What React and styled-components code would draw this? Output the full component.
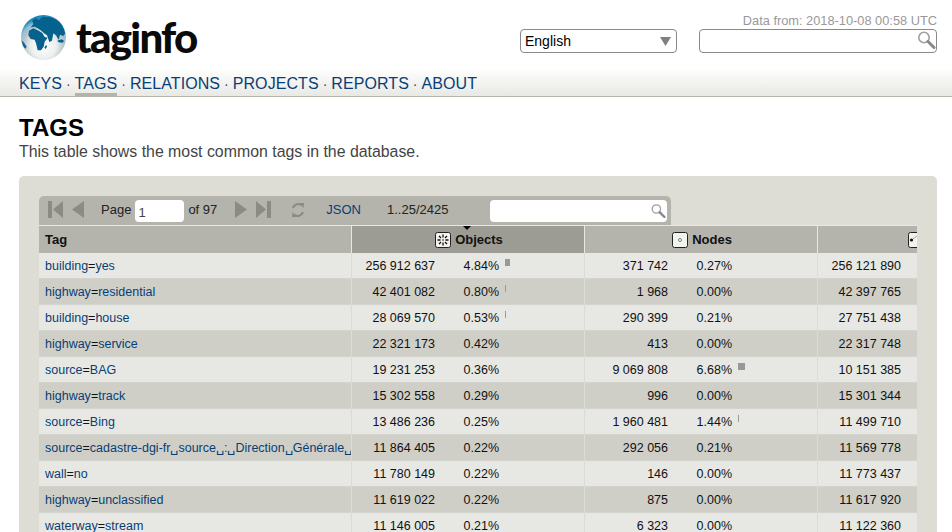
import React from 'react';
import styled, { createGlobalStyle } from 'styled-components';

const GlobalStyle = createGlobalStyle`
  html, body {
    margin: 0;
    padding: 0;
    height: 100%;
    overflow: hidden;
    background: #fff;
    font-family: "Liberation Sans", Arial, sans-serif;
    color: #000;
  }
  a { color: #083e76; text-decoration: none; }
`;

const Header = styled.header`
  height: 96px;
  border-bottom: 1px solid #b4b4ac;
  background: linear-gradient(to bottom, #fff 0, #fff 68px, #e8e8e4 96px);
  padding: 0 15px 0 19px;
  display: flex;
  flex-direction: column;
`;

const TopRow = styled.div`
  height: 70px;
  display: flex;
  justify-content: space-between;
`;

const Brand = styled.div`
  display: flex;
  align-items: flex-start;
  padding-top: 13px;
`;

const LogoText = styled.span`
  font-family: Lato, sans-serif;
  font-weight: 900;
  font-size: 42px;
  line-height: 48px;
  letter-spacing: -1.8px;
  color: #0a0a0a;
  margin-left: 8px;
`;

const Controls = styled.div`
  display: flex;
  flex-direction: column;
  align-items: flex-end;
  padding-top: 13px;
`;

const DataDate = styled.div`
  font-size: 12.8px;
  line-height: 15px;
  color: #999;
`;

const ControlRow = styled.div`
  display: flex;
  gap: 22px;
  margin-top: 1px;
`;

const LangSelect = styled.div`
  width: 157px;
  height: 24px;
  box-sizing: border-box;
  border: 1px solid #8a8a8a;
  border-radius: 4px;
  background: #fff;
  font-size: 14px;
  line-height: 22px;
  padding: 0 5px 0 4px;
  display: flex;
  justify-content: space-between;
  align-items: center;
`;

const SearchBox = styled.div`
  width: 238px;
  height: 24px;
  box-sizing: border-box;
  border: 1px solid #8a8a8a;
  border-radius: 4px;
  background: #fff;
  display: flex;
  justify-content: flex-end;
  align-items: flex-start;
`;

const Nav = styled.nav`
  display: flex;
  font-size: 16px;
  line-height: 28px;
  height: 26px;
  letter-spacing: 0.08px;
`;

const NavItem = styled.a`
  height: 23px;
  border-bottom: 3px solid ${p => (p.$active ? '#b4b4ac' : 'transparent')};
`;

const NavDot = styled.span`
  width: 12.6px;
  text-align: center;
  color: #444;
  font-size: 14px;
`;

const Main = styled.main`
  padding: 17px 15px 0 19px;
`;

const Title = styled.h1`
  margin: 0;
  font-size: 24px;
  line-height: 28px;
  font-weight: 700;
`;

const Intro = styled.p`
  margin: 0 0 14px;
  font-size: 15.88px;
  line-height: 20px;
  color: #444;
`;

const Panel = styled.section`
  background: #ddddd5;
  border-radius: 5px 5px 0 0;
  padding: 20px;
`;

const Toolbar = styled.div`
  width: 632px;
  height: 29px;
  box-sizing: border-box;
  padding-bottom: 2px;
  background: #b4b4ac;
  border-radius: 5px 5px 0 0;
  display: flex;
  align-items: center;
  font-size: 13px;
  color: #222;
`;

const PagerIcon = styled.svg`
  display: block;
  flex: none;
  margin-left: ${p => p.$gap || 0}px;
`;

const PageLabel = styled.span`
  margin-left: ${p => p.$gap || 0}px;
  white-space: nowrap;
`;

const PageInput = styled.div`
  width: 49px;
  height: 22px;
  box-sizing: border-box;
  margin: 3px 4px 0;
  padding: 5px 0 0 3px;
  background: #fff;
  border-radius: 4px;
  font-size: 13px;
  line-height: 15px;
  color: #444;
`;

const JsonLink = styled.a`
  margin-left: 21px;
`;

const QuickSearch = styled.div`
  width: 177px;
  height: 22px;
  margin: 3px 0 0 42px;
  background: #fff;
  border-radius: 4px;
  display: flex;
  justify-content: flex-end;
  align-items: center;
  padding-right: 1px;
  box-sizing: border-box;
`;

const TableClip = styled.div`
  width: 878px;
  overflow: hidden;
`;

const Table = styled.div`
  width: 1012px;
`;

const HeadRow = styled.div`
  display: grid;
  grid-template-columns: 313px 233px 233px 233px;
  height: 28px;
  border-top: 1px solid #e7e8e4;
  box-sizing: border-box;
  font-size: 13px;
  font-weight: 700;
  line-height: 26px;
  color: #111;
`;

const HeadCell = styled.div`
  position: relative;
  background: ${p => (p.$sorted ? '#9c9c94' : '#b4b4ac')};
  border-right: 1px solid #e7e8e4;
  padding-left: ${p => (p.$left ? '6px' : '2px')};
  display: flex;
  align-items: center;
  justify-content: ${p => (p.$left ? 'flex-start' : 'center')};
  gap: 4px;
`;

const SortArrow = styled.span`
  position: absolute;
  top: 0;
  left: 111px;
  width: 0;
  height: 0;
  border: 4px solid transparent;
  border-top-color: #000;
  border-bottom: 0;
`;

const Row = styled.div`
  display: grid;
  grid-template-columns: 313px 233px 233px 233px;
  height: 26px;
  box-sizing: border-box;
  border-bottom: 1px solid #d4d4ce;
  background: ${p => (p.$odd ? '#cfcfc8' : '#e7e8e4')};
  font-size: 12.5px;
  line-height: 26px;
  color: #111;
`;

const TagCell = styled.div`
  padding-left: 6px;
  border-right: 1px solid #dcdcd6;
  white-space: nowrap;
  overflow: hidden;
`;

const CountCell = styled.div`
  display: flex;
  border-right: 1px solid #dcdcd6;
`;

const Count = styled.span`
  width: 83px;
  text-align: right;
  white-space: pre;
`;

const Percent = styled.span`
  width: 64px;
  text-align: right;
`;

const Bar = styled.span`
  display: block;
  height: 7px;
  margin: 6px 0 0 6px;
  background: #999;
`;

const Globe = () => (
  <svg width="49" height="49" viewBox="57 39 147 147">
    <defs>
      <radialGradient id="sea" cx="0.5" cy="0.68" r="0.62">
        <stop offset="0" stopColor="#ffffff" />
        <stop offset="0.45" stopColor="#eef0f0" />
        <stop offset="0.72" stopColor="#b9c3c8" />
        <stop offset="0.86" stopColor="#8fc0d6" />
        <stop offset="1" stopColor="#1f8ab8" />
      </radialGradient>
      <clipPath id="ball">
        <circle cx="130.5" cy="112.5" r="66" />
      </clipPath>
    </defs>
    <circle cx="130.5" cy="112.5" r="67.5" fill="url(#sea)" />
    <g clipPath="url(#ball)" fill="#05628f">
      <path d="M96 62 L108 54 L116 60 L128 50 L150 52 L172 60 L190 76 L197 98 L190 108 L180 104 L176 120 L168 106 L160 100 L156 122 L148 126 L141 106 L132 100 L124 92 L112 84 L104 80 L92 82 L100 72 Z" />
      <path d="M87 92 L100 85 L116 92 L127 99 L134 111 L143 113 L134 125 L131 140 L123 151 L113 151 L108 130 L104 119 L92 117 L85 106 Z" />
      <path d="M62 118 L72 128 L80 140 L76 146 L66 136 Z" />
      <path d="M172 122 L184 118 L192 122 L188 128 L176 127 Z" />
      <path d="M138 134 L141 140 L136 148 L134 142 Z" />
    </g>
  </svg>
);

const Magnifier = ({ size = 20, color = '#888' }) => (
  <svg width={size} height={size} viewBox="0 0 20 20">
    <circle cx="8" cy="7.5" r="5.2" fill="none" stroke={color} strokeWidth="1.6" opacity="0.8" />
    <path d="M12 11.5 L18 17.5" stroke={color} strokeWidth="3" strokeLinecap="round" />
  </svg>
);

const Caret = () => (
  <svg width="11" height="9" viewBox="0 0 11 9">
    <path d="M0 0 H11 L5.5 9 Z" fill="#808080" />
  </svg>
);

const First = () => (
  <PagerIcon $gap={9} width="15" height="17" viewBox="0 0 15 17" fill="#8b8b85">
    <path d="M0 0 H4 V17 H0 Z M15 0 V17 L5 8.5 Z" />
  </PagerIcon>
);
const Prev = () => (
  <PagerIcon $gap={9} width="12" height="17" viewBox="0 0 12 17" fill="#8b8b85">
    <path d="M12 0 V17 L0 8.5 Z" />
  </PagerIcon>
);
const Next = () => (
  <PagerIcon $gap={18} width="12" height="17" viewBox="0 0 12 17" fill="#8b8b85">
    <path d="M0 0 V17 L12 8.5 Z" />
  </PagerIcon>
);
const Last = () => (
  <PagerIcon $gap={9} width="15" height="17" viewBox="0 0 15 17" fill="#8b8b85">
    <path d="M0 0 L10 8.5 L0 17 Z M11 0 H15 V17 H11 Z" />
  </PagerIcon>
);
const Reload = () => (
  <PagerIcon $gap={20} width="14" height="16" viewBox="0 0 14 16" fill="none" stroke="#8b8b85" strokeWidth="2.2">
    <path d="M2 6 A5.6 5.6 0 0 1 11 3.4" />
    <path d="M12 10 A5.6 5.6 0 0 1 3 12.6" />
    <path d="M9 1 L13 1 L12.5 6 Z M5 15 L1 15 L1.5 10 Z" fill="#8b8b85" stroke="none" />
  </PagerIcon>
);

const TypeIcon = ({ type }) => (
  <svg width="16" height="16" viewBox="0 0 16 16">
    <rect x="0.5" y="0.5" width="15" height="15" rx="2" fill="#f2f2ee" stroke="#222" />
    {type === 'all' && (
      <g stroke="#111" strokeWidth="1.3">
        <path d="M8 2.5 V5.5 M8 10.5 V13.5 M2.5 8 H5.5 M10.5 8 H13.5 M4 4 L6 6 M12 4 L10 6 M4 12 L6 10 M12 12 L10 10" />
        <circle cx="8" cy="8" r="0.8" fill="#111" stroke="none" />
      </g>
    )}
    {type === 'node' && <circle cx="8" cy="8" r="1.5" fill="#fff" stroke="#6a8a6a" />}
    {type === 'way' && (
      <g>
        <path d="M3.5 8 L9 4" stroke="#aaa" strokeWidth="1" />
        <circle cx="3.5" cy="8" r="1.6" fill="#111" />
      </g>
    )}
  </svg>
);

const rows = [
  ['building', 'yes', '256 912 637', '4.84', '371 742', '0.27', '256 121 890'],
  ['highway', 'residential', '42 401 082', '0.80', '1 968', '0.00', '42 397 765'],
  ['building', 'house', '28 069 570', '0.53', '290 399', '0.21', '27 751 438'],
  ['highway', 'service', '22 321 173', '0.42', '413', '0.00', '22 317 748'],
  ['source', 'BAG', '19 231 253', '0.36', '9 069 808', '6.68', '10 151 385'],
  ['highway', 'track', '15 302 558', '0.29', '996', '0.00', '15 301 344'],
  ['source', 'Bing', '13 486 236', '0.25', '1 960 481', '1.44', '11 499 710'],
  ['source', 'cadastre-dgi-fr␣source␣:␣Direction␣Générale␣des␣Impôts␣-␣Cadastre', '11 864 405', '0.22', '292 056', '0.21', '11 569 778'],
  ['wall', 'no', '11 780 149', '0.22', '146', '0.00', '11 773 437'],
  ['highway', 'unclassified', '11 619 022', '0.22', '875', '0.00', '11 617 920'],
  ['waterway', 'stream', '11 146 005', '0.21', '6 323', '0.00', '11 122 360'],
];

const Stat = ({ count, pct }) => {
  const width = Math.round(parseFloat(pct));
  return (
    <CountCell>
      <Count>{count}</Count>
      <Percent>{pct}%</Percent>
      {width > 0 && <Bar style={{ width }} />}
    </CountCell>
  );
};

const navItems = ['KEYS', 'TAGS', 'RELATIONS', 'PROJECTS', 'REPORTS', 'ABOUT'];

export default function App() {
  return (
    <>
      <GlobalStyle />
      <Header>
        <TopRow>
          <Brand>
            <Globe />
            <LogoText>taginfo</LogoText>
          </Brand>
          <Controls>
            <DataDate>Data from: 2018-10-08 00:58 UTC</DataDate>
            <ControlRow>
              <LangSelect>
                English
                <Caret />
              </LangSelect>
              <SearchBox>
                <Magnifier />
              </SearchBox>
            </ControlRow>
          </Controls>
        </TopRow>
        <Nav>
          {navItems.map((item, i) => (
            <React.Fragment key={item}>
              {i > 0 && <NavDot>·</NavDot>}
              <NavItem href="#" $active={item === 'TAGS'}>{item}</NavItem>
            </React.Fragment>
          ))}
        </Nav>
      </Header>
      <Main>
        <Title>TAGS</Title>
        <Intro>This table shows the most common tags in the database.</Intro>
        <Panel>
          <Toolbar>
            <First />
            <Prev />
            <PageLabel $gap={17}>Page</PageLabel>
            <PageInput>1</PageInput>
            <PageLabel>of 97</PageLabel>
            <Next />
            <Last />
            <Reload />
            <JsonLink href="#">JSON</JsonLink>
            <PageLabel $gap={26}>1..25/2425</PageLabel>
            <QuickSearch>
              <Magnifier size={16} />
            </QuickSearch>
          </Toolbar>
          <TableClip>
            <Table>
              <HeadRow>
                <HeadCell $left>Tag</HeadCell>
                <HeadCell $sorted>
                  <SortArrow />
                  <TypeIcon type="all" />
                  Objects
                </HeadCell>
                <HeadCell>
                  <TypeIcon type="node" />
                  Nodes
                </HeadCell>
                <HeadCell>
                  <TypeIcon type="way" />
                  Ways
                </HeadCell>
              </HeadRow>
              {rows.map(([key, value, objects, objectsPct, nodes, nodesPct, ways], i) => (
                <Row key={key + value} $odd={i % 2 === 1}>
                  <TagCell>
                    <a href="#">{key}</a>=<a href="#">{value}</a>
                  </TagCell>
                  <Stat count={objects} pct={objectsPct} />
                  <Stat count={nodes} pct={nodesPct} />
                  <CountCell>
                    <Count>{ways}</Count>
                  </CountCell>
                </Row>
              ))}
            </Table>
          </TableClip>
        </Panel>
      </Main>
    </>
  );
}
